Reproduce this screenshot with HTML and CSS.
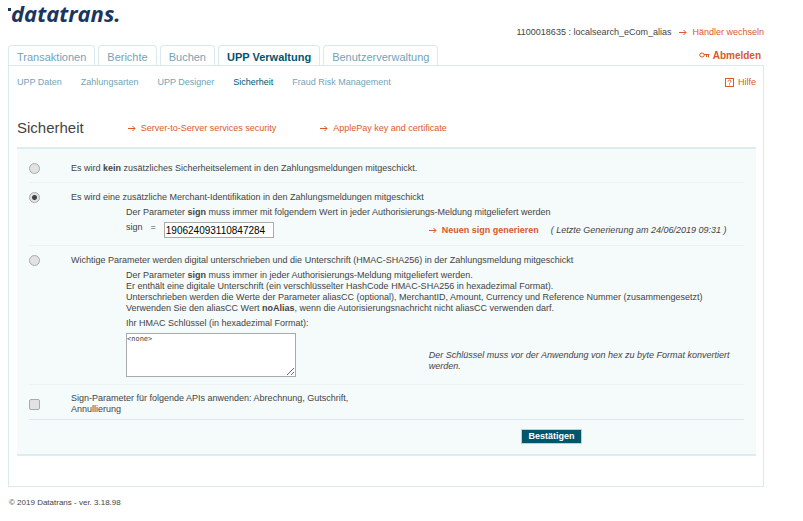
FILE: index.html
```html
<!DOCTYPE html>
<html lang="de">
<head>
    <meta charset="UTF-8">
    <meta name="viewport" content="width=device-width, initial-scale=1.0">
    <title>Datatrans - Sicherheit</title>
    <link rel="stylesheet" href="styles.css">
</head>
<body>
    <header class="header">
        <a class="logo" href="#"><span class="logo-dot"></span>datatrans.</a>
        <div class="merchant">
            <span>1100018635 : localsearch_eCom_alias</span>
            <a class="arrow-link" href="#"><svg class="arrow" viewBox="0 0 8 7"><path d="M0 3.5h7M4.5 1L7 3.5 4.5 6"/></svg>Händler wechseln</a>
        </div>
    </header>

    <nav class="tabs">
        <a class="tab" href="#">Transaktionen</a>
        <a class="tab" href="#">Berichte</a>
        <a class="tab" href="#">Buchen</a>
        <a class="tab active" href="#">UPP Verwaltung</a>
        <a class="tab" href="#">Benutzerverwaltung</a>
        <a class="logout" href="#">
            <svg class="key" viewBox="0 0 11 6"><path d="M5 2.500h5.500M7.500 2.500v2.500M9.500 2.500v3"/><ellipse cx="3" cy="3" rx="2.300" ry="2"/></svg>Abmelden
        </a>
    </nav>

    <main class="panel">
        <nav class="subnav">
            <a href="#">UPP Daten</a>
            <a href="#">Zahlungsarten</a>
            <a href="#">UPP Designer</a>
            <a class="active" href="#">Sicherheit</a>
            <a href="#">Fraud Risk Management</a>
            <a class="help" href="#">
                <svg class="help-icon" viewBox="0 0 9 9"><rect x=".5" y=".5" width="8" height="8"/><path d="M3 3.500C3 1.600 6 1.600 6 3.300 6 4.500 4.500 4.300 4.500 5.500M4.500 6.400v1"/></svg>Hilfe
            </a>
        </nav>

        <div class="title-row">
            <h1>Sicherheit</h1>
            <a class="arrow-link" href="#"><svg class="arrow" viewBox="0 0 8 7"><path d="M0 3.5h7M4.5 1L7 3.5 4.5 6"/></svg>Server-to-Server services security</a>
            <a class="arrow-link" href="#"><svg class="arrow" viewBox="0 0 8 7"><path d="M0 3.5h7M4.5 1L7 3.5 4.5 6"/></svg>ApplePay key and certificate</a>
        </div>

        <form class="box">
            <div class="row row-first">
                <input type="radio" name="security" id="secNone">
                <label for="secNone">Es wird <b>kein</b> zusätzliches Sicherheitselement in den Zahlungsmeldungen mitgeschickt.</label>
            </div>

            <div class="row">
                <input type="radio" name="security" id="secSign" checked>
                <label for="secSign">Es wird eine zusätzliche Merchant-Identifikation in den Zahlungsmeldungen mitgeschickt</label>
                <div class="detail">
                    <p>Der Parameter <b>sign</b> muss immer mit folgendem Wert in jeder Authorisierungs-Meldung mitgeliefert werden</p>
                    <div class="split">
                        <div class="sign-field">
                            <label for="sign">sign</label>
                            <span>=</span>
                            <input type="text" id="sign" value="190624093110847284">
                        </div>
                        <div class="generate">
                            <a class="arrow-link" href="#"><svg class="arrow" viewBox="0 0 8 7"><path d="M0 3.5h7M4.5 1L7 3.5 4.5 6"/></svg><b>Neuen sign generieren</b></a>
                            <i>( Letzte Generierung am 24/06/2019 09:31 )</i>
                        </div>
                    </div>
                </div>
            </div>

            <div class="row">
                <input type="radio" name="security" id="secHmac">
                <label for="secHmac">Wichtige Parameter werden digital unterschrieben und die Unterschrift (HMAC-SHA256) in der Zahlungsmeldung mitgeschickt</label>
                <div class="detail">
                    <p>
                        Der Parameter <b>sign</b> muss immer in jeder Authorisierungs-Meldung mitgeliefert werden.<br>
                        Er enthält eine digitale Unterschrift (ein verschlüsselter HashCode HMAC-SHA256 in hexadezimal Format).<br>
                        Unterschrieben werden die Werte der Parameter aliasCC (optional), MerchantID, Amount, Currency und Reference Nummer (zusammengesetzt)<br>
                        Verwenden Sie den aliasCC Wert <b>noAlias</b>, wenn die Autorisierungsnachricht nicht aliasCC verwenden darf.
                    </p>
                    <label for="hmac">Ihr HMAC Schlüssel (in hexadezimal Format):</label>
                    <div class="split">
                        <textarea id="hmac">&lt;none&gt;</textarea>
                        <i class="note">Der Schlüssel muss vor der Anwendung von hex zu byte Format konvertiert werden.</i>
                    </div>
                </div>
            </div>

            <div class="row row-last">
                <input type="checkbox" id="apis">
                <label class="apis-label" for="apis">Sign-Parameter für folgende APIs anwenden: Abrechnung, Gutschrift, Annullierung</label>
            </div>

            <div class="buttons">
                <button type="button">Bestätigen</button>
            </div>
        </form>
    </main>

    <footer class="footer">© 2019 Datatrans - ver. 3.18.98</footer>
</body>
</html>
```
FILE: styles.css
```css
* {
    box-sizing: border-box;
}

body {
    margin: 0;
    padding: 0 39px 0 8px;
    background: #fff;
    color: #444;
    font: 9px/11px "Liberation Sans", Arial, sans-serif;
}

a {
    color: #d9592b;
    text-decoration: none;
}

p, h1 {
    margin: 0;
}

.header {
    display: flex;
    justify-content: space-between;
    height: 45px;
}

.logo {
    display: flex;
    color: #1b365d;
    font: italic bold 22px/26px "Open Sans", sans-serif;
}

.logo-dot {
    width: 3px;
    height: 3px;
    margin-top: 8px;
    background: #1b365d;
}

.merchant {
    display: flex;
    align-items: flex-start;
    gap: 8px;
    padding-top: 27px;
}

.arrow-link {
    display: flex;
    align-items: center;
    gap: 5px;
}

.arrow {
    width: 8px;
    height: 7px;
    fill: none;
    stroke: #d9592b;
}

.tabs {
    display: flex;
    gap: 3px;
}

.tab {
    height: 20px;
    padding: 0 8px;
    border: 1px solid #d9e9ec;
    border-bottom: 0;
    border-radius: 4px 4px 0 0;
    color: #74a3b6;
    font-size: 11px;
    line-height: 22px;
}

.tab.active {
    color: #00566b;
    font-weight: bold;
}

.logout {
    display: flex;
    align-items: center;
    gap: 3px;
    margin-left: auto;
    padding-right: 3px;
    font-size: 10px;
    font-weight: bold;
}

.key {
    width: 11px;
    height: 6px;
    fill: none;
    stroke: #d9592b;
}

.panel {
    padding: 11px 7px 30px 8px;
    border: 1px solid #d9e9ec;
}

.subnav {
    display: flex;
    gap: 19px;
}

.subnav a {
    color: #74a3b6;
}

.subnav .active {
    color: #00566b;
}

.subnav .help {
    display: flex;
    align-items: center;
    gap: 4px;
    margin-left: auto;
    color: #d9592b;
}

.help-icon {
    width: 9px;
    height: 9px;
    fill: none;
    stroke: #d9592b;
}

.title-row {
    display: flex;
    align-items: center;
    gap: 44px;
    padding: 30px 0 9px;
}

h1 {
    font-size: 15px;
    font-weight: normal;
    line-height: 20px;
}

.box {
    padding: 0 12px;
    border-top: 2px solid #dcecf0;
    border-bottom: 2px solid #dcecf0;
    background: #f5fafb;
}

.row {
    display: grid;
    grid-template-columns: 42px 1fr;
    padding: 9px 0 7px;
    border-bottom: 1px solid #ecf2f3;
}

.row-first {
    padding: 14px 0 8px;
}

.row-last {
    align-items: center;
    padding: 8px 0 4px;
    border-color: #d9e9ec;
}

input[type="radio"],
input[type="checkbox"] {
    appearance: none;
    width: 11px;
    height: 11px;
    margin: 0;
    border: 1px solid #aaa;
    border-radius: 2px;
    background: #e2e2e2;
}

input[type="radio"] {
    border-radius: 50%;
}

input[type="radio"]:checked {
    background: radial-gradient(circle, #444 2px, #e2e2e2 3px);
}

.detail {
    display: grid;
    grid-column: 2;
    gap: 4px;
    padding: 4px 0 0 55px;
}

.split {
    display: grid;
    grid-template-columns: 49% 1fr;
    align-items: center;
}

.sign-field {
    display: flex;
    gap: 8px;
}

input[type="text"] {
    width: 110px;
    height: 16px;
    padding: 0 1px;
    border: 1px solid #aaa;
    background: #fff;
    color: #000;
    font: inherit;
    font-size: 10px;
}

.generate {
    display: flex;
    gap: 12px;
}

textarea {
    width: 170px;
    height: 44px;
    padding: 0;
    border: 1px solid #aaa;
    background: #fff;
    color: #444;
    font: 7px/10px "DejaVu Sans Mono", monospace;
}

.note {
    padding-top: 12px;
}

.apis-label {
    max-width: 300px;
}

.buttons {
    display: flex;
    justify-content: center;
    padding: 9px 0 10px 330px;
}

button {
    height: 15px;
    padding: 0 6px;
    border: 1px solid #b9d2d8;
    background: #00566b;
    color: #fff;
    font: bold 9px/11px "Liberation Sans", Arial, sans-serif;
}

.footer {
    padding: 10px 1px;
    font-size: 8px;
}
```
